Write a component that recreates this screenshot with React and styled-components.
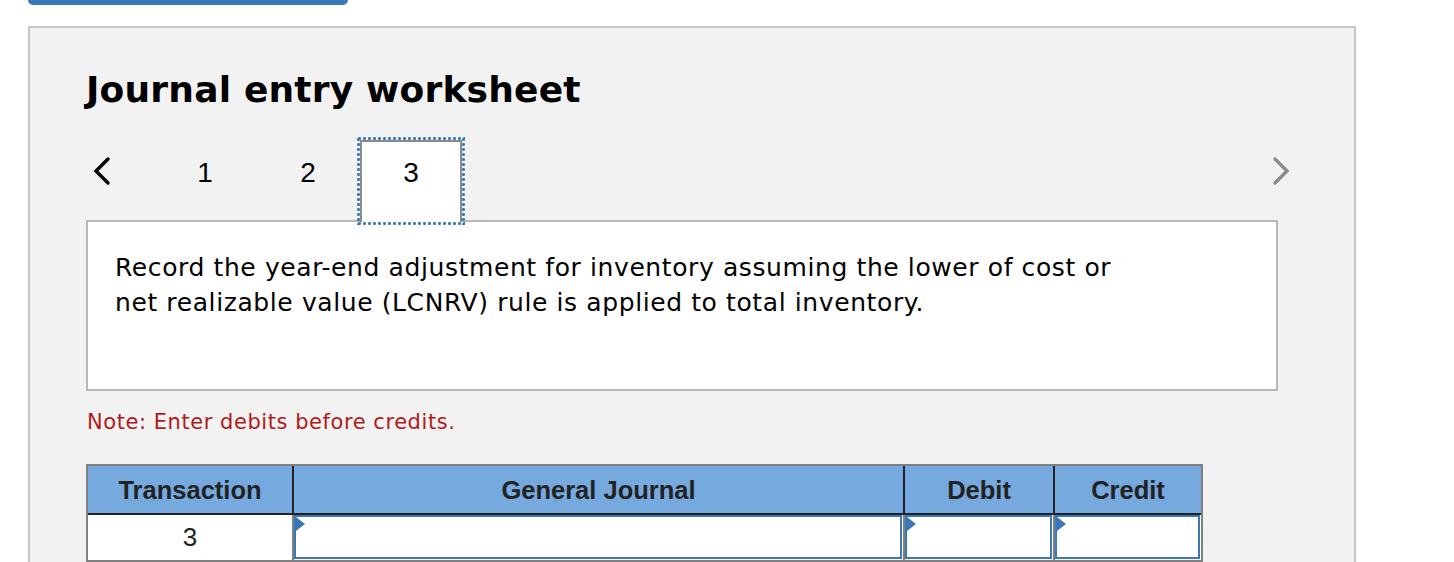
import React from "react";
import styled, { createGlobalStyle } from "styled-components";

const Global = createGlobalStyle`
  html, body { margin: 0; padding: 0; background: #ffffff; }
  body { overflow: hidden; }
  * { box-sizing: border-box; }
`;

const Page = styled.div`
  width: 1454px;
  height: 562px;
  overflow: hidden;
`;

const TopBar = styled.div`
  margin-left: 28px;
  width: 320px;
  height: 5px;
  background: #3a78b8;
  border-radius: 0 0 5px 5px;
`;

const Panel = styled.section`
  margin: 21px 0 0 28px;
  width: 1328px;
  height: 600px;
  background: #f2f2f2;
  border: 2px solid #c6c6c6;
  padding: 40px 76px 0 56px;
`;

const Title = styled.h1`
  margin: 0;
  font-family: "DejaVu Sans", Verdana, sans-serif;
  font-weight: bold;
  font-size: 36px;
  letter-spacing: 0.2px;
  line-height: 44px;
  color: #000;
`;

const NavRow = styled.div`
  margin-top: 28px;
  margin-bottom: -2px;
  margin-right: -18px;
  height: 82px;
  display: flex;
  align-items: flex-start;
  position: relative;
  z-index: 1;
`;

const Arrow = styled.button`
  border: none;
  background: transparent;
  padding: 0;
  margin: 0;
  height: 62px;
  display: flex;
  align-items: center;
  cursor: pointer;
  color: ${(p) => p.$color};
`;

const PrevArrow = styled(Arrow)`
  width: 68px;
  padding-left: 6px;
  justify-content: flex-start;
`;

const NextArrow = styled(Arrow)`
  width: 30px;
  margin-left: auto;
  justify-content: center;
`;

const Tabs = styled.div`
  display: flex;
  gap: 1px;
`;

const dot = "radial-gradient(circle at center, #3a78b8 1.25px, transparent 1.75px)";

const Tab = styled.div`
  position: relative;
  width: 102px;
  height: 82px;
  padding-top: 15px;
  text-align: center;
  font-family: "Liberation Sans", Arial, sans-serif;
  font-size: 28px;
  line-height: 32px;
  color: #000;
  border: 2px solid ${(p) => (p.$active ? "#8a8a8a" : "transparent")};
  border-bottom: none;
  background: ${(p) => (p.$active ? "#ffffff" : "transparent")};

  &::before {
    content: "";
    display: ${(p) => (p.$active ? "block" : "none")};
    position: absolute;
    left: -5px;
    right: -5px;
    top: -5px;
    bottom: -3px;
    pointer-events: none;
    background-image: ${dot}, ${dot}, ${dot}, ${dot};
    background-size: 5px 3px, 5px 3px, 3px 5px, 3px 5px;
    background-position: 0 0, 0 100%, 0 0, 100% 0;
    background-repeat: repeat-x, repeat-x, repeat-y, repeat-y;
  }
`;

const PromptBox = styled.div`
  height: 171px;
  background: #ffffff;
  border: 2px solid #b8b8b8;
  padding: 28px 27px 0 27px;
  font-family: "DejaVu Sans", Verdana, sans-serif;
  font-size: 25px;
  letter-spacing: 0.6px;
  line-height: 35px;
  color: #000;
`;

const PromptText = styled.p`
  margin: 0;
  max-width: 1040px;
`;

const Note = styled.p`
  margin: 17px 0 0 1px;
  font-family: "DejaVu Sans", Verdana, sans-serif;
  font-size: 21px;
  letter-spacing: 0.55px;
  line-height: 28px;
  color: #b3191a;
`;

const Table = styled.div`
  margin-top: 28px;
  width: 1117px;
  border: 2px solid #808080;
  border-bottom: none;
  font-family: "Liberation Sans", Arial, sans-serif;
`;

const HeadRow = styled.div`
  display: grid;
  grid-template-columns: 204px 611px 150px 148px;
  background: #76aadf;
  border-bottom: 2px solid #222;
`;

const HeadCell = styled.div`
  height: 47px;
  padding-top: 2px;
  display: flex;
  align-items: center;
  justify-content: center;
  font-weight: bold;
  font-size: 25.5px;
  color: #222;
  border-left: ${(p) => (p.$first ? "none" : "2px solid #222")};
`;

const BodyRow = styled.div`
  display: grid;
  grid-template-columns: 204px 611px 150px 148px;
  background: #ffffff;
  border-bottom: 2px solid #808080;
`;

const BodyCell = styled.div`
  height: 45px;
  display: flex;
  align-items: center;
  justify-content: center;
  font-size: 26px;
  color: #222;
  border-left: ${(p) => (p.$first ? "none" : "2px solid #808080")};
  padding: ${(p) => (p.$first ? "0" : "0 1px 1px 0")};
`;

const InputField = styled.div`
  position: relative;
  width: 100%;
  height: 100%;
  background: #ffffff;
  border: 2px solid #3a78b8;
`;

const Triangle = () => (
  <svg
    width="10"
    height="14"
    viewBox="0 0 10 14"
    style={{ position: "absolute", left: 0, top: 0 }}
  >
    <polygon points="0,0 9,7 0,14" fill="#3a78b8" />
  </svg>
);

const ChevronLeft = () => (
  <svg width="20" height="30" viewBox="0 0 20 30">
    <polyline
      points="16,3 4,15 16,27"
      fill="none"
      stroke="currentColor"
      strokeWidth="3.4"
      strokeLinecap="round"
      strokeLinejoin="miter"
    />
  </svg>
);

const ChevronRight = () => (
  <svg width="20" height="30" viewBox="0 0 20 30">
    <polyline
      points="4,3 16,15 4,27"
      fill="none"
      stroke="currentColor"
      strokeWidth="3.4"
      strokeLinecap="round"
      strokeLinejoin="miter"
    />
  </svg>
);

const columns = ["Transaction", "General Journal", "Debit", "Credit"];

export default function App() {
  return (
    <Page>
      <Global />
      <TopBar />
      <Panel>
        <Title>Journal entry worksheet</Title>
        <NavRow>
          <PrevArrow $color="#000" aria-label="Previous">
            <ChevronLeft />
          </PrevArrow>
          <Tabs>
            <Tab>1</Tab>
            <Tab>2</Tab>
            <Tab $active>3</Tab>
          </Tabs>
          <NextArrow $color="#8c8c8c" aria-label="Next">
            <ChevronRight />
          </NextArrow>
        </NavRow>
        <PromptBox>
          <PromptText>
            Record the year-end adjustment for inventory assuming the lower of
            cost or net realizable value (LCNRV) rule is applied to total
            inventory.
          </PromptText>
        </PromptBox>
        <Note>Note: Enter debits before credits.</Note>
        <Table>
          <HeadRow>
            {columns.map((c, i) => (
              <HeadCell key={c} $first={i === 0}>
                {c}
              </HeadCell>
            ))}
          </HeadRow>
          <BodyRow>
            <BodyCell $first>3</BodyCell>
            {[1, 2, 3].map((k) => (
              <BodyCell key={k}>
                <InputField>
                  <Triangle />
                </InputField>
              </BodyCell>
            ))}
          </BodyRow>
        </Table>
      </Panel>
    </Page>
  );
}
